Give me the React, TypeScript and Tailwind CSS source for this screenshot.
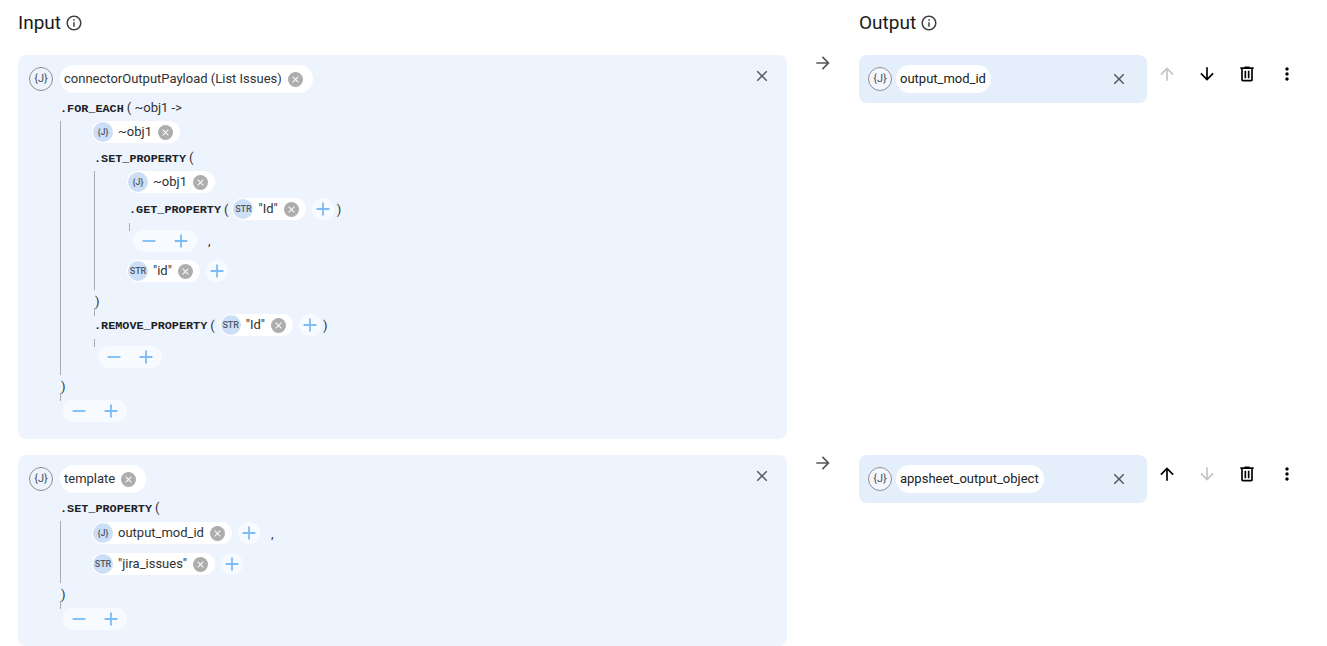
import type { ReactNode } from "react";

const paths = {
  close: "M19 6.41 17.59 5 12 10.59 6.41 5 5 6.41 10.59 12 5 17.59 6.41 19 12 13.41 17.59 19 19 17.59 13.41 12z",
  add: "M19 13h-6v6h-2v-6H5v-2h6V5h2v6h6v2z",
  remove: "M19 13H5v-2h14v2z",
  up: "M4 12l1.41 1.41L11 7.83V20h2V7.83l5.58 5.59L20 12l-8-8-8 8z",
  down: "M20 12l-1.41-1.41L13 16.17V4h-2v12.17l-5.58-5.59L4 12l8 8 8-8z",
  forward: "M12 4l-1.41 1.41L16.17 11H4v2h12.17l-5.58 5.59L12 20l8-8z",
  trash:
    "M7 21c-.55 0-1.02-.2-1.41-.59C5.2 20.02 5 19.55 5 19V6H4V4h5V3h6v1h5v2h-1v13c0 .55-.2 1.02-.59 1.41-.39.39-.86.59-1.41.59H7zM17 6H7v13h10V6zM9 17h2V8H9v9zm4 0h2V8h-2v9z",
  more: "M12 8c1.1 0 2-.9 2-2s-.9-2-2-2-2 .9-2 2 .9 2 2 2zm0 2c-1.1 0-2 .9-2 2s.9 2 2 2 2-.9 2-2-.9-2-2-2zm0 6c-1.1 0-2 .9-2 2s.9 2 2 2 2-.9 2-2-.9-2-2-2z",
  info: "M11 7h2v2h-2zm0 4h2v6h-2zm1-9C6.48 2 2 6.48 2 12s4.48 10 10 10 10-4.48 10-10S17.52 2 12 2zm0 18c-4.41 0-8-3.59-8-8s3.59-8 8-8 8 3.59 8 8-3.59 8-8 8z",
};

function Icon({ d, className }: { d: string; className: string }) {
  return (
    <svg viewBox="0 0 24 24" fill="currentColor" className={className}>
      <path d={d} />
    </svg>
  );
}

function ClearDot() {
  return (
    <span className="w-[15px] h-[15px] rounded-full bg-[#adadad] flex items-center justify-center shrink-0">
      <Icon d={paths.close} className="w-[11px] h-[11px] text-white" />
    </span>
  );
}

function Chip({ kind, label }: { kind: "J" | "STR"; label: string }) {
  return (
    <div className="h-[22px] rounded-full bg-white pl-px pr-[7px] flex items-center shrink-0">
      <span className="w-[20px] h-[20px] rounded-full bg-[#cddff6] text-[#4f5865] text-[9px] font-medium flex items-center justify-center shrink-0">
        {kind === "J" ? "{J}" : "STR"}
      </span>
      <span className="ml-[5px] mr-[6px] text-[13px] text-[#303134]">{label}</span>
      <ClearDot />
    </div>
  );
}

function Add() {
  return (
    <span className="w-[22px] h-[22px] rounded-full bg-[#f7fafe] flex items-center justify-center shrink-0">
      <Icon d={paths.add} className="w-[22px] h-[22px] text-[#7dbcf6]" />
    </span>
  );
}

function Pill() {
  return (
    <div className="w-[64px] h-[22px] rounded-full bg-[#f7fafe] flex items-center justify-between px-[5px] shrink-0">
      <Icon d={paths.remove} className="w-[22px] h-[22px] text-[#7dbcf6]" />
      <Icon d={paths.add} className="w-[22px] h-[22px] text-[#7dbcf6]" />
    </div>
  );
}

function Fn({ name }: { name: string }) {
  return (
    <span className="mt-[2px] font-['Liberation_Mono',monospace] font-bold text-[11.8px] text-[#202124]">{name}</span>
  );
}

function Paren({ children }: { children: ReactNode }) {
  return <span className="text-[13px] text-[#303134]">{children}</span>;
}

function Stub({ className }: { className: string }) {
  return <div className={`w-px h-[8px] bg-[#a8abb0] ${className}`} />;
}

function Closing() {
  return <div className="h-[16px] mt-[3px] ml-px"><Paren>)</Paren></div>;
}

function Root({ label }: { label: string }) {
  return (
    <div className="flex items-center gap-[7px]">
      <span className="w-[24px] h-[24px] rounded-full border border-[#8f8f8f] text-[#4a4f55] text-[11px] flex items-center justify-center">
        {"{J}"}
      </span>
      <div className="h-[28px] rounded-full bg-white pl-[4px] pr-[10px] flex items-center">
        <span className="mr-[6px] text-[13px] text-[#303134]">{label}</span>
        <ClearDot />
      </div>
    </div>
  );
}

function InputCard({ label, bottom, children }: { label: string; bottom: string; children: ReactNode }) {
  return (
    <div className={`flex justify-between bg-[#eef4fd] rounded-[8px] pl-[11px] pr-[16px] pt-[10px] ${bottom}`}>
      <div>
        <Root label={label} />
        <div className="ml-[31px]">{children}</div>
      </div>
      <Icon d={paths.close} className="w-[18px] h-[18px] mt-[2px] text-[#55585d]" />
    </div>
  );
}

function OutputCard({ label }: { label: string }) {
  return (
    <div className="h-[48px] flex items-start justify-between bg-[#e5effc] rounded-[8px] pl-[9px] pr-[19px] pt-[10px]">
      <div className="flex items-center gap-[4px]">
        <span className="w-[24px] h-[24px] rounded-full border border-[#8f8f8f] bg-[#f3f7fd] text-[#4a4f55] text-[11px] flex items-center justify-center">
          {"{J}"}
        </span>
        <div className="h-[28px] rounded-full bg-white pl-[4px] pr-[5px] flex items-center text-[13px] text-[#202124]">{label}</div>
      </div>
      <Icon d={paths.close} className="w-[18px] h-[18px] mt-[5px] text-[#55585d]" />
    </div>
  );
}

function Actions({ upOn, downOn }: { upOn: boolean; downOn: boolean }) {
  return (
    <div className="flex items-center gap-[20px] pl-[10px] pt-[9px] text-black">
      <Icon d={paths.up} className={`w-[20px] h-[20px] ${upOn ? "text-black" : "text-[#c4c4c4]"}`} />
      <Icon d={paths.down} className={`w-[20px] h-[20px] ${downOn ? "text-black" : "text-[#c4c4c4]"}`} />
      <Icon d={paths.trash} className="w-[20px] h-[20px]" />
      <Icon d={paths.more} className="w-[20px] h-[20px]" />
    </div>
  );
}

function Arrow() {
  return (
    <div className="flex justify-center">
      <Icon d={paths.forward} className="w-[20px] h-[20px] text-[#55585d]" />
    </div>
  );
}

function Heading({ text }: { text: string }) {
  return (
    <div className="flex items-center gap-[4px] h-[45px]">
      <span className="text-[19px] text-[#1a1a1a]">{text}</span>
      <Icon d={paths.info} className="w-[18px] h-[18px] text-[#3c4043]" />
    </div>
  );
}

export default function App() {
  return (
    <div className="w-[1327px] h-[646px] overflow-hidden bg-white pl-[18px] leading-[16px] font-['Roboto',sans-serif] grid grid-cols-[769px_72px_288px_1fr] content-start">
      <Heading text="Input" />
      <div />
      <Heading text="Output" />
      <div />

      <div className="mt-[10px]">
        <InputCard label="connectorOutputPayload (List Issues)" bottom="pb-[17px]">
          <div className="h-[16px] mt-[7px] flex items-center gap-[3px]">
            <Fn name=".FOR_EACH" />
            <Paren>( ~obj1 -&gt;</Paren>
          </div>
          <div className="mt-[6px] border-l border-[#a8abb0] pl-[31px] pb-[7px]">
            <div className="-mt-px flex">
              <Chip kind="J" label="~obj1" />
            </div>
            <div className="ml-[2px]">
              <div className="h-[16px] mt-[7px] flex items-center gap-[3px]">
                <Fn name=".SET_PROPERTY" />
                <Paren>(</Paren>
              </div>
              <div className="mt-[5px] border-l border-[#a8abb0] pl-[32px] pb-[8px]">
                <div className="flex">
                  <Chip kind="J" label="~obj1" />
                </div>
                <div className="ml-[2px]">
                  <div className="mt-[5px] flex items-center">
                    <Fn name=".GET_PROPERTY" />
                    <span className="ml-[3px] mr-[4px]"><Paren>(</Paren></span>
                    <Chip kind="STR" label='"Id"' />
                    <span className="ml-[6px]"><Add /></span>
                    <span className="ml-[3px]"><Paren>)</Paren></span>
                  </div>
                  <Stub className="mt-[3px]" />
                  <div className="-mt-px ml-[4px] flex items-center gap-[11px]">
                    <Pill />
                    <Paren>,</Paren>
                  </div>
                </div>
                <div className="mt-[8px] flex items-center gap-[6px]">
                  <Chip kind="STR" label='"id"' />
                  <Add />
                </div>
              </div>
              <Closing />
              <Stub className="-mt-px" />
              <div className="-mt-[2px] flex items-center">
                <Fn name=".REMOVE_PROPERTY" />
                <span className="ml-[3px] mr-[5px]"><Paren>(</Paren></span>
                <Chip kind="STR" label='"Id"' />
                <span className="ml-[6px]"><Add /></span>
                <span className="ml-[2px]"><Paren>)</Paren></span>
              </div>
              <Stub className="mt-[3px]" />
              <div className="-mt-px ml-[4px] flex">
                <Pill />
              </div>
            </div>
          </div>
          <Closing />
          <Stub className="-mt-px" />
          <div className="-mt-px ml-[3px] flex">
            <Pill />
          </div>
        </InputCard>
      </div>
      <div className="mt-[8px]"><Arrow /></div>
      <div className="mt-[10px]"><OutputCard label="output_mod_id" /></div>
      <div className="mt-[10px]"><Actions upOn={false} downOn={true} /></div>

      <div className="mt-[16px]">
        <InputCard label="template" bottom="pb-[16px]">
          <div className="h-[16px] mt-[7px] flex items-center gap-[3px]">
            <Fn name=".SET_PROPERTY" />
            <Paren>(</Paren>
          </div>
          <div className="mt-[5px] border-l border-[#a8abb0] pl-[31px] pt-px pb-[8px]">
            <div className="flex items-center gap-[6px]">
              <Chip kind="J" label="output_mod_id" />
              <Add />
              <span className="ml-[5px]"><Paren>,</Paren></span>
            </div>
            <div className="mt-[9px] flex items-center gap-[6px]">
              <Chip kind="STR" label='"jira_issues"' />
              <Add />
            </div>
          </div>
          <Closing />
          <Stub className="-mt-px" />
          <div className="-mt-px ml-[3px] flex">
            <Pill />
          </div>
        </InputCard>
      </div>
      <div className="mt-[14px]"><Arrow /></div>
      <div className="mt-[16px]"><OutputCard label="appsheet_output_object" /></div>
      <div className="mt-[16px]"><Actions upOn={true} downOn={false} /></div>
    </div>
  );
}
